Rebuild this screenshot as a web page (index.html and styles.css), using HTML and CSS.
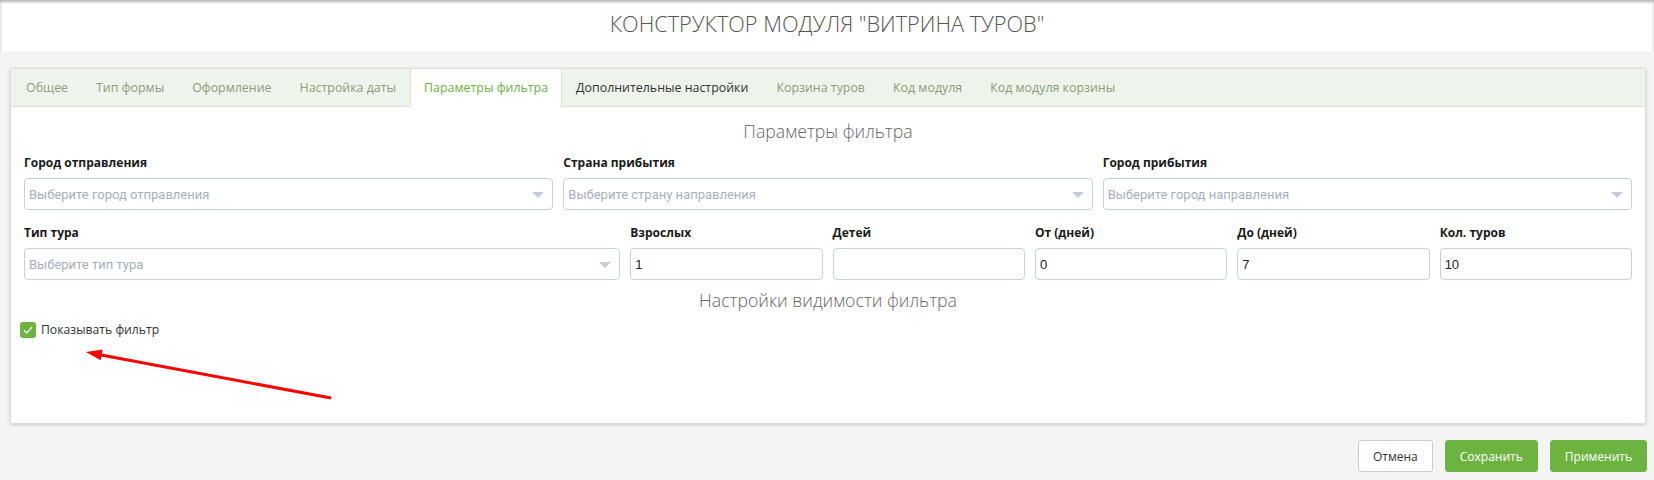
FILE: index.html
```html
<!DOCTYPE html>
<html lang="ru">
<head>
  <meta charset="UTF-8">
  <meta name="viewport" content="width=device-width, initial-scale=1.0">
  <title>Конструктор модуля "Витрина туров"</title>
  <link rel="stylesheet" href="styles.css">
</head>
<body>
  <!-- Page title -->
  <header class="page-head">
    <h1>КОНСТРУКТОР МОДУЛЯ "ВИТРИНА ТУРОВ"</h1>
  </header>

  <main class="page-body">
    <div class="panel">
      <!-- Tabs -->
      <ul class="tabs">
        <li><a href="#">Общее</a></li>
        <li><a href="#">Тип формы</a></li>
        <li><a href="#">Оформление</a></li>
        <li><a href="#">Настройка даты</a></li>
        <li class="active"><a href="#">Параметры фильтра</a></li>
        <li class="hover"><a href="#">Дополнительные настройки</a></li>
        <li><a href="#">Корзина туров</a></li>
        <li><a href="#">Код модуля</a></li>
        <li><a href="#">Код модуля корзины</a></li>
      </ul>

      <!-- Filter params pane -->
      <div class="tab-pane">
        <h2 class="section-title">Параметры фильтра</h2>

        <div class="form-row cols-3">
          <div class="field">
            <label>Город отправления</label>
            <div class="select"><span class="placeholder">Выберите город отправления</span></div>
          </div>
          <div class="field">
            <label>Страна прибытия</label>
            <div class="select"><span class="placeholder">Выберите страну направления</span></div>
          </div>
          <div class="field">
            <label>Город прибытия</label>
            <div class="select"><span class="placeholder">Выберите город направления</span></div>
          </div>
        </div>

        <div class="form-row cols-6">
          <div class="field">
            <label>Тип тура</label>
            <div class="select"><span class="placeholder">Выберите тип тура</span></div>
          </div>
          <div class="field">
            <label>Взрослых</label>
            <input class="input" type="text" value="1">
          </div>
          <div class="field">
            <label>Детей</label>
            <input class="input" type="text" value="">
          </div>
          <div class="field">
            <label>От (дней)</label>
            <input class="input" type="text" value="0">
          </div>
          <div class="field">
            <label>До (дней)</label>
            <input class="input" type="text" value="7">
          </div>
          <div class="field">
            <label>Кол. туров</label>
            <input class="input" type="text" value="10">
          </div>
        </div>

        <h2 class="section-title visibility-title">Настройки видимости фильтра</h2>

        <label class="check">
          <span class="check-box">
            <svg width="10" height="8" viewBox="0 0 10 8"><path d="M1 4.2 L3.8 7 L9 1" fill="none" stroke="#fff" stroke-width="1.3"/></svg>
          </span>
          Показывать фильтр
        </label>
      </div>

      <!-- red annotation arrow drawn over the screenshot -->
      <svg class="note-arrow" width="280" height="70" viewBox="0 0 280 70">
        <line x1="30" y1="16" x2="260" y2="59" stroke="#f00" stroke-width="3"/>
        <polygon points="15,13 31.6,10.6 29.6,21.2" fill="#f00"/>
      </svg>
    </div>

    <!-- Bottom buttons -->
    <div class="actions">
      <button class="btn btn-default">Отмена</button>
      <button class="btn btn-green">Сохранить</button>
      <button class="btn btn-green">Применить</button>
    </div>
  </main>
</body>
</html>
```

FILE: styles.css
```css
* {
  margin: 0;
  padding: 0;
  box-sizing: border-box;
}
body {
  font-family: 'Open Sans', sans-serif;
  background: #f4f4f4;
  color: #333;
  font-size: 13px;
}
/* Header */
.page-head {
  background: #fff;
  height: 52px;
  box-shadow: inset 0 2px 3px rgba(0,0,0,0.3);
  text-align: center;
}
.page-head h1 {
  font-weight: 300;
  font-size: 21.7px;
  line-height: 48px;
  color: #555;
}
/* Main panel */
.page-body {
  padding: 16px 7px 0 10px;
}
.panel {
  position: relative;
  background: #fff;
  border: 1px solid #d7e4cf;
  box-shadow: 0 1px 3px rgba(0,0,0,0.18);
  height: 356px;
  margin-right: 1px;
}
/* Tabs */
.tabs {
  list-style: none;
  display: flex;
  background: #eef4eb;
  border-bottom: 1px solid #d7e4cf;
  height: 38px;
  padding-left: 1px;
}
.tabs li {
  border-left: 1px solid transparent;
  border-right: 1px solid transparent;
  margin-bottom: -1px;
}
.tabs li a {
  display: block;
  padding: 0 13px;
  line-height: 38px;
  font-size: 12.4px;
  color: #8b9c7b;
  text-decoration: none;
}
.tabs li.active {
  background: #fff;
  border-color: #d7e4cf;
  height: 38px;
}
.tabs li.active a {
  color: #6db33f;
}
.tabs li.hover a {
  color: #333;
}
/* Pane content */
.tab-pane {
  padding: 12px 13px 0;
}
.section-title {
  text-align: center;
  font-weight: 300;
  font-size: 17.7px;
  line-height: 24px;
  color: #666;
  margin-bottom: 11px;
}
.visibility-title {
  margin-bottom: 9px;
}
.form-row {
  display: grid;
  gap: 10px;
  margin-bottom: 14px;
}
.form-row.cols-3 {
  grid-template-columns: repeat(3, 1fr);
}
.form-row.cols-6 {
  grid-template-columns: 3.1fr repeat(5, 1fr);
  margin-bottom: 8px;
}
.field label {
  display: block;
  font-weight: 700;
  font-size: 12px;
  line-height: 18px;
  color: #1a1a1a;
  margin-bottom: 6px;
}
.select, .input {
  display: block;
  width: 100%;
  height: 32px;
  border: 1px solid #c9d0da;
  border-radius: 4px;
  background: #fff;
  padding: 0 4px;
}
.select {
  position: relative;
  line-height: 30px;
}
.select::after {
  content: '';
  position: absolute;
  right: 8px;
  top: 13px;
  border-left: 6px solid transparent;
  border-right: 6px solid transparent;
  border-top: 6px solid #c5ccd6;
}
.placeholder {
  font-family: Roboto, sans-serif;
  font-size: 13px;
  color: #a6afbd;
}
.input {
  font-family: 'Liberation Sans', Arial, sans-serif;
  font-size: 13px;
  color: #222;
  outline: none;
}
/* Checkbox */
.check {
  display: flex;
  align-items: center;
  gap: 5px;
  font-size: 12.2px;
  color: #333;
  margin-left: -4px;
}
.check-box {
  width: 16px;
  height: 16px;
  border-radius: 3px;
  background: #6db33f;
  display: flex;
  align-items: center;
  justify-content: center;
}
/* Annotation */
.note-arrow {
  position: absolute;
  left: 60px;
  top: 270px;
}
/* Buttons */
.actions {
  display: flex;
  justify-content: flex-end;
  gap: 12px;
  margin-top: 16px;
}
.btn {
  height: 32px;
  padding: 0 14px;
  border-radius: 3px;
  font-family: 'Open Sans', sans-serif;
  font-size: 12px;
  cursor: pointer;
}
.btn-default {
  background: #fff;
  border: 1px solid #ccc;
  color: #333;
}
.btn-green {
  background: #6db33f;
  border: 1px solid #6db33f;
  color: #fff;
}
```
